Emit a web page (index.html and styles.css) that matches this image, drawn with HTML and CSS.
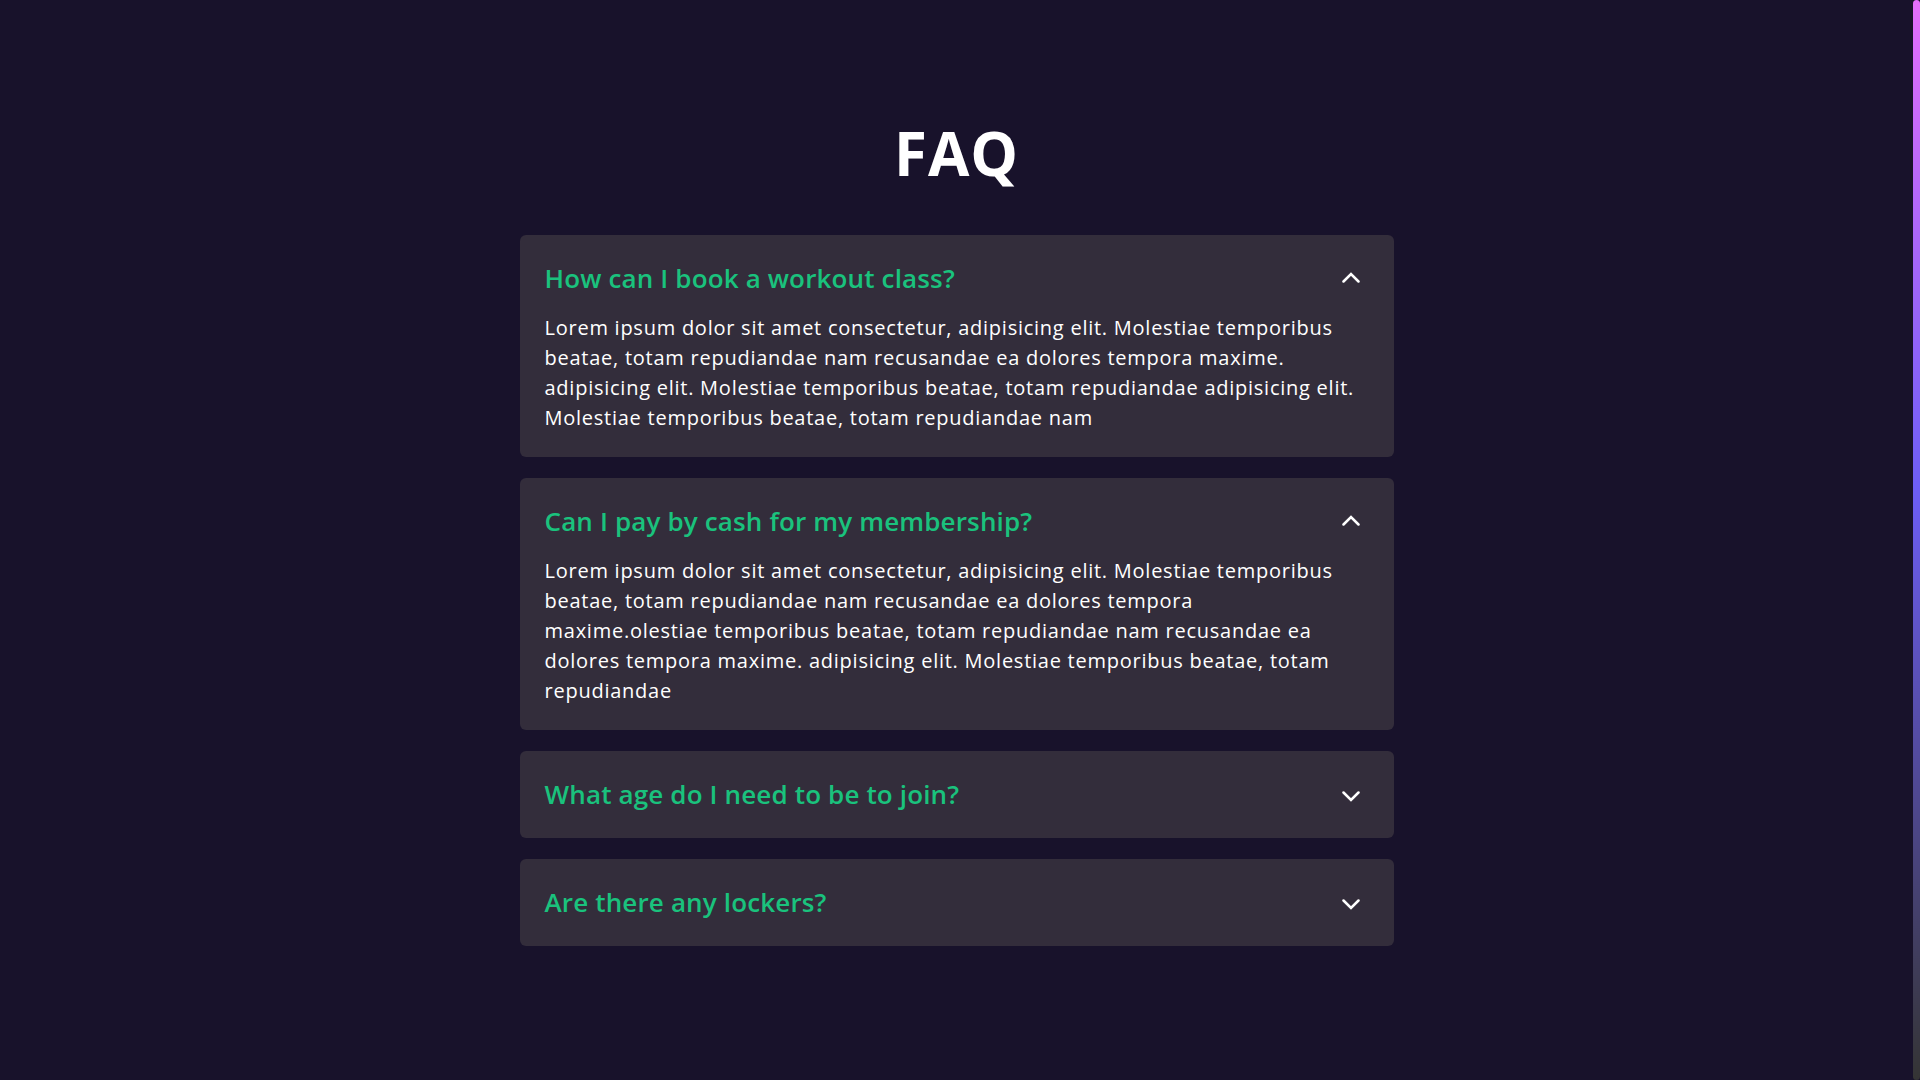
FILE: index.html
```html
<!DOCTYPE html>
<html lang="en">
<head>
  <meta charset="UTF-8" />
  <meta name="viewport" content="width=device-width, initial-scale=1.0" />
  <title>FAQ</title>
  <link rel="stylesheet" href="styles.css">
</head>
<body>
  <main class="faq">
    <h1 class="faq-title">FAQ</h1>

    <div class="faq-list">
      <div class="faq-item open">
        <div class="faq-head" onclick="toggleItem(this)">
          <h3 class="faq-question">How can I book a workout class?</h3>
          <svg class="faq-icon" width="18" height="18" viewBox="0 0 18 18"><polyline points="1.5,6.5 9,14 16.5,6.5" /></svg>
        </div>
        <p class="faq-answer">Lorem ipsum dolor sit amet consectetur, adipisicing elit. Molestiae temporibus beatae, totam repudiandae nam recusandae ea dolores tempora maxime. adipisicing elit. Molestiae temporibus beatae, totam repudiandae adipisicing elit. Molestiae temporibus beatae, totam repudiandae nam</p>
      </div>

      <div class="faq-item open">
        <div class="faq-head" onclick="toggleItem(this)">
          <h3 class="faq-question">Can I pay by cash for my membership?</h3>
          <svg class="faq-icon" width="18" height="18" viewBox="0 0 18 18"><polyline points="1.5,6.5 9,14 16.5,6.5" /></svg>
        </div>
        <p class="faq-answer">Lorem ipsum dolor sit amet consectetur, adipisicing elit. Molestiae temporibus beatae, totam repudiandae nam recusandae ea dolores tempora maxime.olestiae temporibus beatae, totam repudiandae nam recusandae ea dolores tempora maxime. adipisicing elit. Molestiae temporibus beatae, totam repudiandae</p>
      </div>

      <div class="faq-item">
        <div class="faq-head" onclick="toggleItem(this)">
          <h3 class="faq-question">What age do I need to be to join?</h3>
          <svg class="faq-icon" width="18" height="18" viewBox="0 0 18 18"><polyline points="1.5,6.5 9,14 16.5,6.5" /></svg>
        </div>
        <p class="faq-answer">Lorem ipsum dolor sit amet consectetur, adipisicing elit. Molestiae temporibus beatae, totam repudiandae nam recusandae ea dolores tempora maxime.</p>
      </div>

      <div class="faq-item">
        <div class="faq-head" onclick="toggleItem(this)">
          <h3 class="faq-question">Are there any lockers?</h3>
          <svg class="faq-icon" width="18" height="18" viewBox="0 0 18 18"><polyline points="1.5,6.5 9,14 16.5,6.5" /></svg>
        </div>
        <p class="faq-answer">Lorem ipsum dolor sit amet consectetur, adipisicing elit. Molestiae temporibus beatae, totam repudiandae nam recusandae ea dolores tempora maxime.</p>
      </div>
    </div>
  </main>

  <script>
    function toggleItem(head) {
      head.parentElement.classList.toggle('open');
    }
  </script>
</body>
</html>
```

FILE: styles.css
```css
* {
  box-sizing: border-box;
}
html {
  background: #18122b;
}
body {
  margin: 0;
  padding-right: 7px;
  font-family: 'Open Sans', 'Noto Sans', sans-serif;
  background: #18122b;
  color: #fff;
}
/* scroll indicator strip on the right edge */
body::after {
  content: '';
  position: fixed;
  top: 0;
  right: 0;
  width: 7px;
  height: 100vh;
  background: linear-gradient(#e56ffb, #6d5ef6 45%, #343434);
  border-radius: 4px;
}
.faq {
  padding: 117px 20px 40px;
}
.faq-title {
  margin: 0 0 46px;
  font-size: 60px;
  line-height: 72px;
  font-weight: 700;
  letter-spacing: 1px;
  text-align: center;
}
.faq-list {
  width: 874px;
  margin: 0 auto;
  display: flex;
  flex-direction: column;
  gap: 21px;
}
.faq-item {
  background: #332d3b;
  border-radius: 6px;
  padding: 24px 25px;
}
.faq-head {
  display: flex;
  align-items: center;
  justify-content: space-between;
  cursor: pointer;
}
.faq-question {
  margin: 0;
  font-size: 26px;
  line-height: 39px;
  font-weight: 600;
  letter-spacing: 0.15px;
  color: #1ac27d;
}
.faq-icon {
  margin-right: 9px;
  fill: none;
  stroke: #fff;
  stroke-width: 2.5;
  stroke-linecap: round;
  stroke-linejoin: miter;
}
.faq-item.open .faq-icon {
  transform: rotate(180deg);
}
.faq-answer {
  display: none;
  margin: 15px 0 0;
  padding-right: 10px;
  font-size: 20px;
  line-height: 30px;
  letter-spacing: 0.75px;
}
.faq-item.open .faq-answer {
  display: block;
}
```
